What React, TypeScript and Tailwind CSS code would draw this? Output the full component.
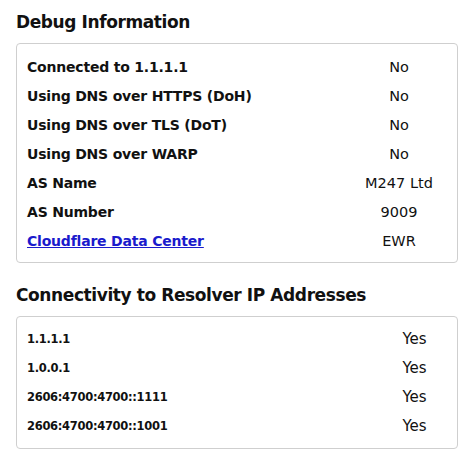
import React from "react";

const debugRows: { label: string; value: string; link?: boolean }[] = [
  { label: "Connected to 1.1.1.1", value: "No" },
  { label: "Using DNS over HTTPS (DoH)", value: "No" },
  { label: "Using DNS over TLS (DoT)", value: "No" },
  { label: "Using DNS over WARP", value: "No" },
  { label: "AS Name", value: "M247 Ltd" },
  { label: "AS Number", value: "9009" },
  { label: "Cloudflare Data Center", value: "EWR", link: true },
];

const resolverRows = [
  "1.1.1.1",
  "1.0.0.1",
  "2606:4700:4700::1111",
  "2606:4700:4700::1001",
];

export default function App() {
  return (
    <div
      className="w-[474px] h-[474px] bg-white px-4 pt-3 text-[#111]"
      style={{ fontFamily: '"DejaVu Sans", Verdana, sans-serif' }}
    >
      <h2 className="h-[20px] leading-[20px] text-[17px] font-bold tracking-[-0.4px] mb-[11px]">
        Debug Information
      </h2>
      <div className="border border-[#cfcfcf] rounded-[4px] pl-[10px] pr-[10px] pt-[9px] pb-[6px]">
        {debugRows.map((r) => (
          <div key={r.label} className="flex items-center h-[29px]">
            <div className="flex-1 text-[14px] font-bold tracking-[-0.2px]">
              {r.link ? (
                <a href="#" className="text-[#1a1acc] underline">
                  {r.label}
                </a>
              ) : (
                r.label
              )}
            </div>
            <div className="w-[96px] text-center text-[14.5px]">{r.value}</div>
          </div>
        ))}
      </div>
      <h2 className="h-[20px] leading-[20px] text-[17px] font-bold tracking-[-0.4px] mt-[22px] mb-[11px]">
        Connectivity to Resolver IP Addresses
      </h2>
      <div className="border border-[#cfcfcf] rounded-[4px] pl-[10px] pr-[10px] pt-[8px] pb-[7px]">
        {resolverRows.map((r) => (
          <div key={r} className="flex items-center h-[29px]">
            <div className="flex-1 text-[11.5px] font-bold tracking-[-0.3px]">{r}</div>
            <div className="w-[65px] text-center text-[15px]">Yes</div>
          </div>
        ))}
      </div>
    </div>
  );
}
